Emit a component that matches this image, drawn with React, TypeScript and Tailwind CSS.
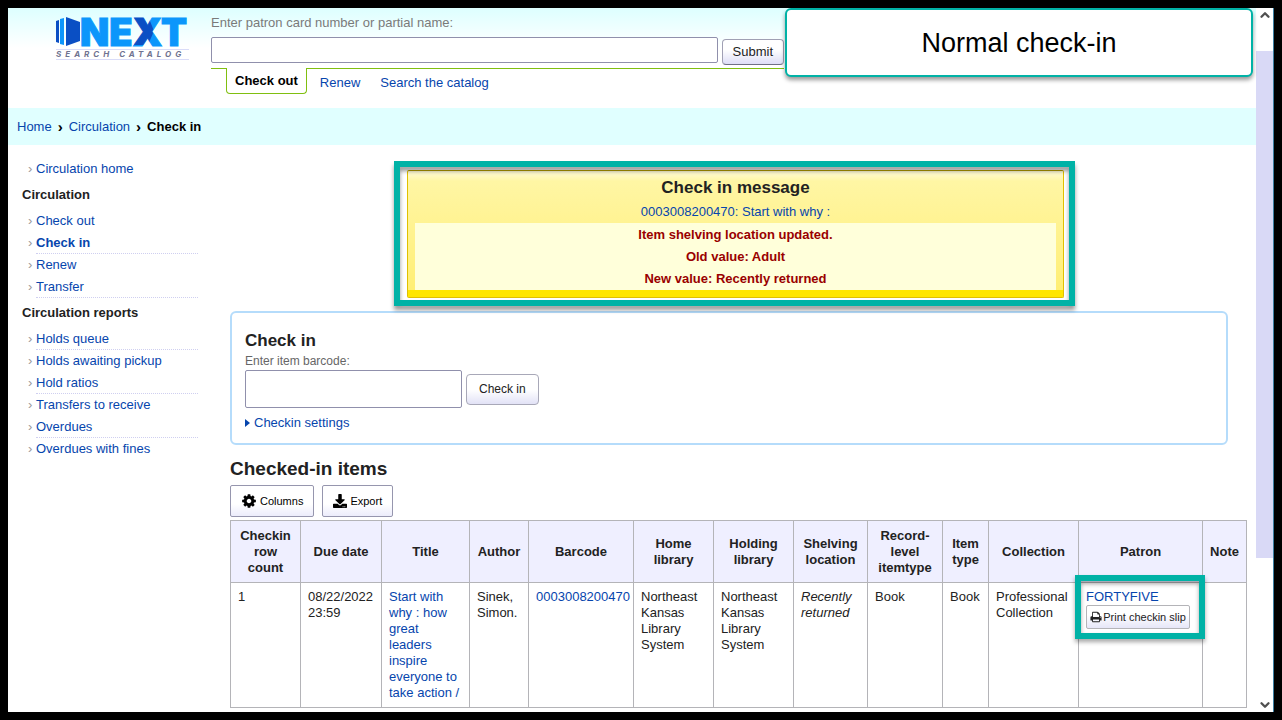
import type { ReactNode } from "react";
import { FaDownload } from "react-icons/fa";
import { ChevronDown, ChevronUp } from "lucide-react";

const link = "text-[#0645ad] hover:underline";

type NavItem = { label: string; ruled?: boolean; active?: boolean };

const circulation: NavItem[] = [
  { label: "Check out" },
  { label: "Check in", ruled: true, active: true },
  { label: "Renew" },
  { label: "Transfer", ruled: true },
];

const reports: NavItem[] = [
  { label: "Holds queue", ruled: true },
  { label: "Holds awaiting pickup" },
  { label: "Hold ratios", ruled: true },
  { label: "Transfers to receive" },
  { label: "Overdues", ruled: true },
  { label: "Overdues with fines" },
];

const columns: { label: string; width: string }[] = [
  { label: "Checkin row count", width: "w-[70px]" },
  { label: "Due date", width: "w-[81px]" },
  { label: "Title", width: "w-[88px]" },
  { label: "Author", width: "w-[59px]" },
  { label: "Barcode", width: "w-[105px]" },
  { label: "Home library", width: "w-[80px]" },
  { label: "Holding library", width: "w-[80px]" },
  { label: "Shelving location", width: "w-[74px]" },
  { label: "Record-level itemtype", width: "w-[75px]" },
  { label: "Item type", width: "w-[46px]" },
  { label: "Collection", width: "w-[90px]" },
  { label: "Patron", width: "w-[124px]" },
  { label: "Note", width: "w-[44px]" },
];

function CogIcon() {
  return (
    <svg viewBox="0 0 1792 1792" className="size-4" fill="currentColor" aria-hidden="true">
      <path d="M1152 896q0-106-75-181t-181-75-181 75-75 181 75 181 181 75 181-75 75-181zm512-109v222q0 12-8 23t-20 13l-185 28q-19 54-39 91 35 50 107 138 10 12 10 25t-9 23q-27 37-99 108t-94 71q-12 0-26-9l-138-108q-44 23-91 38-16 136-29 186-7 28-36 28h-222q-14 0-24.5-8.5t-11.5-21.5l-28-184q-49-16-90-37l-141 107q-10 9-25 9-14 0-25-11-126-114-165-168-7-10-7-23 0-12 8-23 15-21 51-66.5t54-70.5q-27-50-41-99l-183-27q-13-2-21-12.5t-8-23.5v-222q0-12 8-23t19-13l186-28q14-46 39-92-40-57-107-138-10-12-10-24 0-10 9-23 26-36 98.5-107.5t94.5-71.5q13 0 26 10l138 107q44-23 91-38 16-136 29-186 7-28 36-28h222q14 0 24.5 8.5t11.5 21.5l28 184q49 16 90 37l142-107q9-9 24-9 13 0 25 10 129 119 165 170 7 8 7 22 0 12-8 23-15 21-51 66.5t-54 70.5q26 50 41 98l183 28q13 2 21 12.5t8 23.5z" />
    </svg>
  );
}

function PrintIcon() {
  return (
    <svg viewBox="0 0 1792 1792" className="size-3" fill="currentColor" aria-hidden="true">
      <path d="M448 1536h896v-256h-896v256zm0-640h896v-384h-160q-40 0-68-28t-28-68v-160h-640v640zm1152 64q0-26-19-45t-45-19-45 19-19 45 19 45 45 19 45-19 19-45zm128 0v416q0 13-9.5 22.5t-22.5 9.5h-224v160q0 40-28 68t-68 28h-960q-40 0-68-28t-28-68v-160h-224q-13 0-22.5-9.5t-9.5-22.5v-416q0-79 56.5-135.5t135.5-56.5h64v-544q0-40 28-68t68-28h672q40 0 88 20t76 48l152 152q28 28 48 76t20 88v256h64q79 0 135.5 56.5t56.5 135.5z" />
    </svg>
  );
}

function Logo() {
  return (
    <a href="#" aria-label="NEXT Search Catalog" className="block w-[133px] shrink-0">
      <svg viewBox="0 0 133 32" className="block h-8 w-full overflow-visible">
        <defs>
          <pattern
            id="logo-ink"
            patternUnits="userSpaceOnUse"
            x="0"
            y="-10"
            width="140"
            height="60"
          >
            <rect width="140" height="60" fill="#0c96fb" />
            <path d="M78 10 H92 L98 25 L92 39 H78 Z" fill="#0a4fc4" />
          </pattern>
        </defs>
        <path d="M0 5 L3 4 V27 L0 26 Z" fill="#0a4fc4" />
        <path d="M4 3 L8 2 V29 L4 28 Z" fill="#0c96fb" />
        <path d="M10 1 L24 6 V25 L10 30 Z" fill="#0a4fc4" />
        <text
          x="24"
          y="30"
          fill="url(#logo-ink)"
          stroke="url(#logo-ink)"
          strokeWidth="1"
          className="font-['Inter',sans-serif] text-[38px] font-black"
        >
          NEXT
        </text>
      </svg>
      <span className="mt-px block border-y border-[#d9dcf8] font-['Inter',sans-serif] text-[8px] leading-[9px] font-bold tracking-[4px] whitespace-nowrap text-[#6f7390] italic">
        SEARCH CATALOG
      </span>
    </a>
  );
}

function NavList({ items }: { items: NavItem[] }) {
  return (
    <ul>
      {items.map((item) => (
        <li key={item.label} className="flex">
          <span aria-hidden="true" className="w-3.5 pl-1.5 leading-[22px] text-[#999]">
            ›
          </span>
          <a
            href="#"
            className={`flex-1 border-b border-dotted leading-[21px] text-[#0645ad] ${
              item.ruled ? "border-[#cfcff0]" : "border-transparent"
            } ${item.active ? "font-bold" : ""}`}
          >
            {item.label}
          </a>
        </li>
      ))}
    </ul>
  );
}

function ToolButton({ icon, children }: { icon: ReactNode; children: ReactNode }) {
  return (
    <button
      type="button"
      className="flex h-8 items-center gap-[3px] rounded-xs border border-[#9696ae] bg-linear-to-b from-white from-60% to-[#ececfb] px-2.5 text-[11px] text-black"
    >
      {icon}
      {children}
    </button>
  );
}

function Td({ children }: { children?: ReactNode }) {
  return <td className="border border-[#b4b4b8] py-1.5 pr-1 pl-[7px]">{children}</td>;
}

export default function App() {
  return (
    <div className="h-screen bg-black p-2 font-['Liberation_Sans',Arial,sans-serif] text-[13px] leading-4 text-[#222]">
      <div className="relative flex h-full overflow-hidden bg-white">
        <div className="min-w-0 flex-1 overflow-hidden">
          <header className="flex h-[100px] gap-[22px] bg-linear-to-b from-[#ddffff] to-white to-40% pt-[7px] pl-12">
            <div className="pt-px">
              <Logo />
            </div>
            <div className="w-[573px]">
              <form>
                <label htmlFor="patron" className="mb-1.5 block text-[#7a7a7a]">
                  Enter patron card number or partial name:
                </label>
                <div className="flex gap-1">
                  <input
                    id="patron"
                    type="text"
                    className="h-[26px] min-w-0 flex-1 rounded-xs border border-[#9090ac] bg-white px-2"
                  />
                  <button
                    type="button"
                    className="mt-0.5 h-[26px] rounded-sm border border-[#a0a0b4] border-b-[#707084] bg-linear-to-b from-white from-40% to-[#dedef6] px-2.5"
                  >
                    Submit
                  </button>
                </div>
              </form>
              <nav className="mt-[3px] flex gap-[13px] border-t border-[#80bf10] pl-[15px]">
                <a
                  href="#"
                  className="-mt-px h-[26px] rounded-b-sm border border-t-0 border-[#80bf10] bg-white px-2 pt-[5px] font-bold text-black"
                >
                  Check out
                </a>
                <a href="#" className={`mr-[7px] pt-1.5 ${link}`}>
                  Renew
                </a>
                <a href="#" className={`pt-1.5 ${link}`}>
                  Search the catalog
                </a>
              </nav>
            </div>
          </header>

          <nav className="flex h-[37px] items-center gap-1.5 bg-[#e0ffff] pl-[9px]">
            <a href="#" className={link}>
              Home
            </a>
            <span className="text-[15px] font-bold text-black">›</span>
            <a href="#" className={link}>
              Circulation
            </a>
            <span className="text-[15px] font-bold text-black">›</span>
            <strong className="text-black">Check in</strong>
          </nav>

          <div className="flex">
            <aside className="mr-8 w-[190px] shrink-0 pt-[13px] pl-3.5">
              <NavList items={[{ label: "Circulation home" }]} />
              <h2 className="font-bold leading-[30px]">Circulation</h2>
              <NavList items={circulation} />
              <h2 className="font-bold leading-[30px]">Circulation reports</h2>
              <NavList items={reports} />
            </aside>

            <main className="min-w-0 flex-1 pt-[25px] pr-[11px]">
              <div className="pr-1">
                <div className="relative mx-auto w-[65%]">
                  <section className="rounded-xs border border-[#e0c000] border-t-[#b8a000] bg-linear-to-b from-[#fffbd8] via-[#fff6a4] via-8% to-[#ffee70] px-[7px] pt-1.5 text-center leading-[22px]">
                    <h2 className="text-[17px] font-bold">Check in message</h2>
                    <p className="pt-[2px]">
                      <a href="#" className={link}>
                        0003008200470: Start with why :
                      </a>
                    </p>
                    <div className="bg-[#ffffda] pt-px font-bold text-[#990000]">
                      <p>Item shelving location updated.</p>
                      <p>Old value: Adult</p>
                      <p>New value: Recently returned</p>
                    </div>
                    <div className="-mx-[7px] h-[7px] bg-[#ffe600]" />
                  </section>
                  <div className="pointer-events-none absolute -top-[9px] -right-[11px] -bottom-2 -left-[13px] z-10 border-6 border-[#00b2a6] drop-shadow-[0_4px_2px_rgba(0,0,0,0.4)]" />
                </div>
              </div>

              <form className="mt-[13px] mr-[17px] rounded-md border-2 border-[#b5dcfb] px-[13px] pt-[17px] pb-3">
                <h1 className="text-[17px] leading-[22px] font-bold">Check in</h1>
                <label htmlFor="barcode" className="mb-px block pt-px text-[12px] text-[#666]">
                  Enter item barcode:
                </label>
                <div className="flex items-center gap-1">
                  <input
                    id="barcode"
                    type="text"
                    className="h-[38px] w-[217px] rounded-xs border border-[#9090ac] px-2"
                  />
                  <button
                    type="button"
                    className="h-[31px] rounded-sm border border-[#a8a8b8] bg-linear-to-b from-white from-50% to-[#e2e2f6] px-3 text-[12px]"
                  >
                    Check in
                  </button>
                </div>
                <a href="#" className="mt-[7px] flex items-center gap-1 text-[#0645ad]">
                  <svg viewBox="0 0 5 8" className="h-2 w-[5px]" fill="currentColor">
                    <path d="M0 0 L5 4 L0 8 Z" />
                  </svg>
                  Checkin settings
                </a>
              </form>

              <h2 className="mt-3 text-[19px] leading-6 font-bold">Checked-in items</h2>
              <div className="mt-1 mb-[3px] flex gap-2">
                <ToolButton icon={<CogIcon />}>Columns</ToolButton>
                <ToolButton icon={<FaDownload className="size-3.5" />}>Export</ToolButton>
              </div>

              <table className="w-full table-fixed border-collapse">
                <colgroup>
                  {columns.map((c) => (
                    <col key={c.label} className={c.width} />
                  ))}
                </colgroup>
                <thead>
                  <tr className="bg-[#efefff]">
                    {columns.map((c) => (
                      <th
                        key={c.label}
                        scope="col"
                        className="border border-[#b4b4b8] px-[7px] pt-[7px] pb-1.5 font-bold"
                      >
                        {c.label}
                      </th>
                    ))}
                  </tr>
                </thead>
                <tbody>
                  <tr className="align-top">
                    <Td>1</Td>
                    <Td>08/22/2022 23:59</Td>
                    <Td>
                      <a href="#" className={`mr-1 block ${link}`}>
                        Start with why : how great leaders inspire everyone to take action /
                      </a>
                    </Td>
                    <Td>Sinek, Simon.</Td>
                    <Td>
                      <a href="#" className={link}>
                        0003008200470
                      </a>
                    </Td>
                    <Td>Northeast Kansas Library System</Td>
                    <Td>Northeast Kansas Library System</Td>
                    <Td>
                      <em>Recently returned</em>
                    </Td>
                    <Td>Book</Td>
                    <Td>Book</Td>
                    <Td>Professional Collection</Td>
                    <Td>
                      <div className="relative w-[104px]">
                        <a href="#" className={`block ${link}`}>
                          FORTYFIVE
                        </a>
                        <button
                          type="button"
                          className="flex h-6 w-full items-center justify-center gap-px rounded-xs border border-[#b4b4b8] bg-linear-to-b from-white from-40% to-[#e6e6f8] text-[11px] whitespace-nowrap"
                        >
                          <PrintIcon />
                          Print checkin slip
                        </button>
                        <div className="pointer-events-none absolute -top-3.5 -right-[15px] -bottom-2.5 -left-[11px] border-6 border-[#00b2a6] drop-shadow-[0_3px_2px_rgba(0,0,0,0.35)]" />
                      </div>
                    </Td>
                    <Td />
                  </tr>
                </tbody>
              </table>
            </main>
          </div>
        </div>

        <div className="flex w-[18px] shrink-0 flex-col border-r border-[#3c7ea0] bg-white">
          <div className="flex h-[43px] justify-center">
            <ChevronUp className="size-3.5 text-[#505050]" strokeWidth={4} />
          </div>
          <div className="h-[72%] bg-[#d9d9f6]" />
          <div className="mt-auto flex justify-center">
            <ChevronDown className="size-3.5 text-[#505050]" strokeWidth={4} />
          </div>
        </div>

        <div className="absolute top-0 right-[21px] z-20 flex h-[69px] w-[468px] items-center justify-center rounded-md border-2 border-[#00b2a6] bg-white text-[27px] text-black shadow-[0_3px_4px_rgba(0,0,0,0.4)]">
          Normal check-in
        </div>
      </div>
    </div>
  );
}
